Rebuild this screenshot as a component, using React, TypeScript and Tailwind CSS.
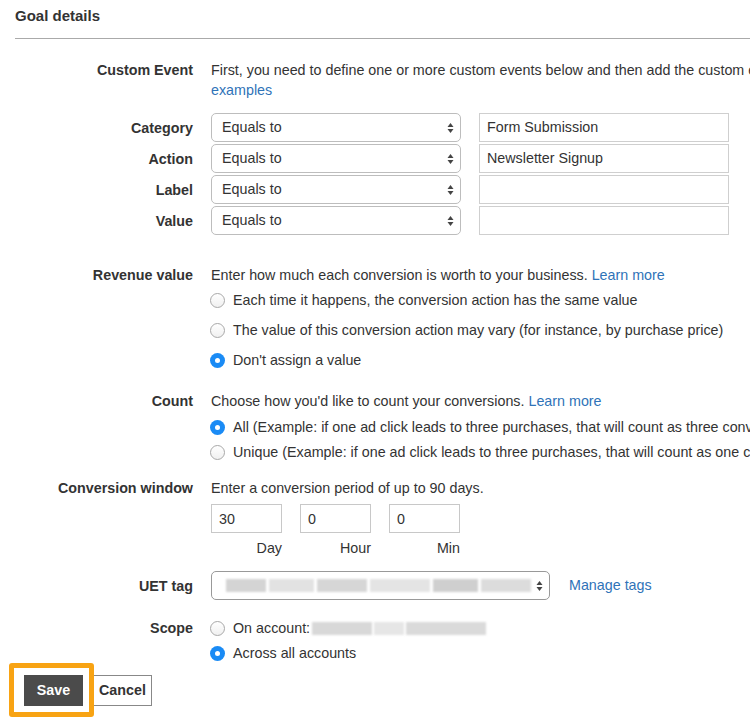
import React from "react";

const font = { fontFamily: '"Liberation Sans", Arial, sans-serif' };

function Arrows() {
  return (
    <svg width="7" height="12" viewBox="0 0 7 12" className="shrink-0">
      <path d="M3.5 1 L6.5 5 L0.5 5 Z" fill="#444" />
      <path d="M3.5 11 L6.5 7 L0.5 7 Z" fill="#444" />
    </svg>
  );
}

function Radio({ checked }: { checked?: boolean }) {
  if (checked) {
    return (
      <span className="w-[15px] h-[15px] rounded-full bg-[#1a8bf5] flex items-center justify-center shrink-0">
        <span className="w-[5px] h-[5px] rounded-full bg-white" />
      </span>
    );
  }
  return (
    <span className="w-[15px] h-[15px] rounded-full border border-[#a8a8a8] bg-gradient-to-b from-white to-[#f0f0f0] shrink-0" />
  );
}

function RadioRow({ checked, children }: { checked?: boolean; children: React.ReactNode }) {
  return (
    <div className="flex items-center h-5 gap-2 whitespace-nowrap -ml-[1px]">
      <Radio checked={checked} />
      <span>{children}</span>
    </div>
  );
}

function Label({ children }: { children: React.ReactNode }) {
  return (
    <div className="w-[178px] shrink-0 text-right font-bold text-[#333] leading-5">{children}</div>
  );
}

function CriteriaRow({ label, value }: { label: string; value: string }) {
  return (
    <div className="flex items-center h-[29px]">
      <Label>{label}</Label>
      <div className="ml-[18px] w-[250px] h-[29px] rounded-[5px] border border-[#bdbdbd] bg-white flex items-center justify-between pl-[10px] pr-[6px]">
        <span>Equals to</span>
        <Arrows />
      </div>
      <div className="ml-[18px] w-[250px] h-[29px] border border-[#cfcfcf] bg-white flex items-center pl-[7px]">
        {value}
      </div>
    </div>
  );
}

function Blur({ w, shade }: { w: number; shade: string }) {
  return <span className={`h-[13px] ${shade} blur-[1px]`} style={{ width: w }} />;
}

export default function App() {
  return (
    <div className="w-full min-h-[720px] overflow-hidden bg-white text-[14.3px] text-[#333]" style={font}>
      <div className="px-[15px]">
        {/* Header */}
        <div className="pt-[6px] pb-[12px] border-b border-[#aaa] -mr-[15px]">
          <h2 className="text-[15px] leading-5 font-bold text-[#333]">Goal details</h2>
        </div>

        {/* Custom Event */}
        <div className="flex mt-[21px]">
          <Label>Custom Event</Label>
          <div className="ml-[18px] leading-5 whitespace-nowrap">
            <div>First, you need to define one or more custom events below and then add the custom events to your goal</div>
            <a className="text-[#2f73b8]">examples</a>
          </div>
        </div>

        <div className="mt-[13px] flex flex-col gap-[2px]">
          <CriteriaRow label="Category" value="Form Submission" />
          <CriteriaRow label="Action" value="Newsletter Signup" />
          <CriteriaRow label="Label" value="" />
          <CriteriaRow label="Value" value="" />
        </div>

        {/* Revenue value */}
        <div className="flex mt-[30px]">
          <Label>Revenue value</Label>
          <div className="ml-[18px] leading-5 whitespace-nowrap">
            <div>
              Enter how much each conversion is worth to your business.{" "}
              <a className="text-[#2f73b8]">Learn more</a>
            </div>
            <div className="mt-[5px] flex flex-col gap-[10px]">
              <RadioRow>Each time it happens, the conversion action has the same value</RadioRow>
              <RadioRow>The value of this conversion action may vary (for instance, by purchase price)</RadioRow>
              <RadioRow checked>Don't assign a value</RadioRow>
            </div>
          </div>
        </div>

        {/* Count */}
        <div className="flex mt-[21px]">
          <Label>Count</Label>
          <div className="ml-[18px] leading-5 whitespace-nowrap">
            <div>
              Choose how you'd like to count your conversions.{" "}
              <a className="text-[#2f73b8]">Learn more</a>
            </div>
            <div className="mt-[6px] flex flex-col gap-[5px]">
              <RadioRow checked>All (Example: if one ad click leads to three purchases, that will count as three conversions)</RadioRow>
              <RadioRow>Unique (Example: if one ad click leads to three purchases, that will count as one conversion)</RadioRow>
            </div>
          </div>
        </div>

        {/* Conversion window */}
        <div className="flex mt-[16px]">
          <Label>Conversion window</Label>
          <div className="ml-[18px] leading-5">
            <div>Enter a conversion period of up to 90 days.</div>
            <div className="mt-[6px] flex gap-[18px]">
              {[
                ["30", "Day"],
                ["0", "Hour"],
                ["0", "Min"],
              ].map(([v, l]) => (
                <div key={l} className="w-[71px] flex flex-col">
                  <div className="h-[29px] border border-[#c8c8c8] flex items-center pl-[7px]">{v}</div>
                  <div className="mt-[5px] text-right">{l}</div>
                </div>
              ))}
            </div>
          </div>
        </div>

        {/* UET tag */}
        <div className="flex items-center mt-[13px]">
          <Label>UET tag</Label>
          <div className="ml-[18px] w-[339px] h-[29px] rounded-[5px] border border-[#999] flex items-center justify-between pl-[14px] pr-[6px]">
            <div className="flex gap-[3px]">
              <Blur w={40} shade="bg-[#d4d4d4]" />
              <Blur w={45} shade="bg-[#e2e2e2]" />
              <Blur w={50} shade="bg-[#d6d6d6]" />
              <Blur w={60} shade="bg-[#e4e4e4]" />
              <Blur w={45} shade="bg-[#cfcfcf]" />
              <Blur w={50} shade="bg-[#dcdcdc]" />
            </div>
            <Arrows />
          </div>
          <a className="ml-[19px] text-[#2f73b8]">Manage tags</a>
        </div>

        {/* Scope */}
        <div className="flex mt-[18px]">
          <Label>Scope</Label>
          <div className="ml-[18px] leading-5 flex flex-col gap-[5px]">
            <div className="flex items-center h-5 gap-2 -ml-[1px]">
              <Radio />
              <span className="flex items-center">
                On account:
                <span className="ml-[2px] flex gap-[2px]">
                  <Blur w={60} shade="bg-[#d8d8d8]" />
                  <Blur w={30} shade="bg-[#e6e6e6]" />
                  <Blur w={80} shade="bg-[#dadada]" />
                </span>
              </span>
            </div>
            <RadioRow checked>Across all accounts</RadioRow>
          </div>
        </div>

        {/* Buttons */}
        <div className="mt-[12px] ml-[9px] flex gap-[10px] pb-[14px]">
          <div className="relative">
            <span className="absolute -left-[15px] -top-[12px] w-[85px] h-[54px] border-[5px] border-[#f8a313] rounded-[3px]" />
            <button className="relative w-[59px] h-[31px] bg-[#4b4b4b] text-white font-bold">Save</button>
          </div>
          <button className="w-[59px] h-[31px] bg-white border border-[#888] font-bold text-[#333]">Cancel</button>
        </div>
      </div>
    </div>
  );
}
